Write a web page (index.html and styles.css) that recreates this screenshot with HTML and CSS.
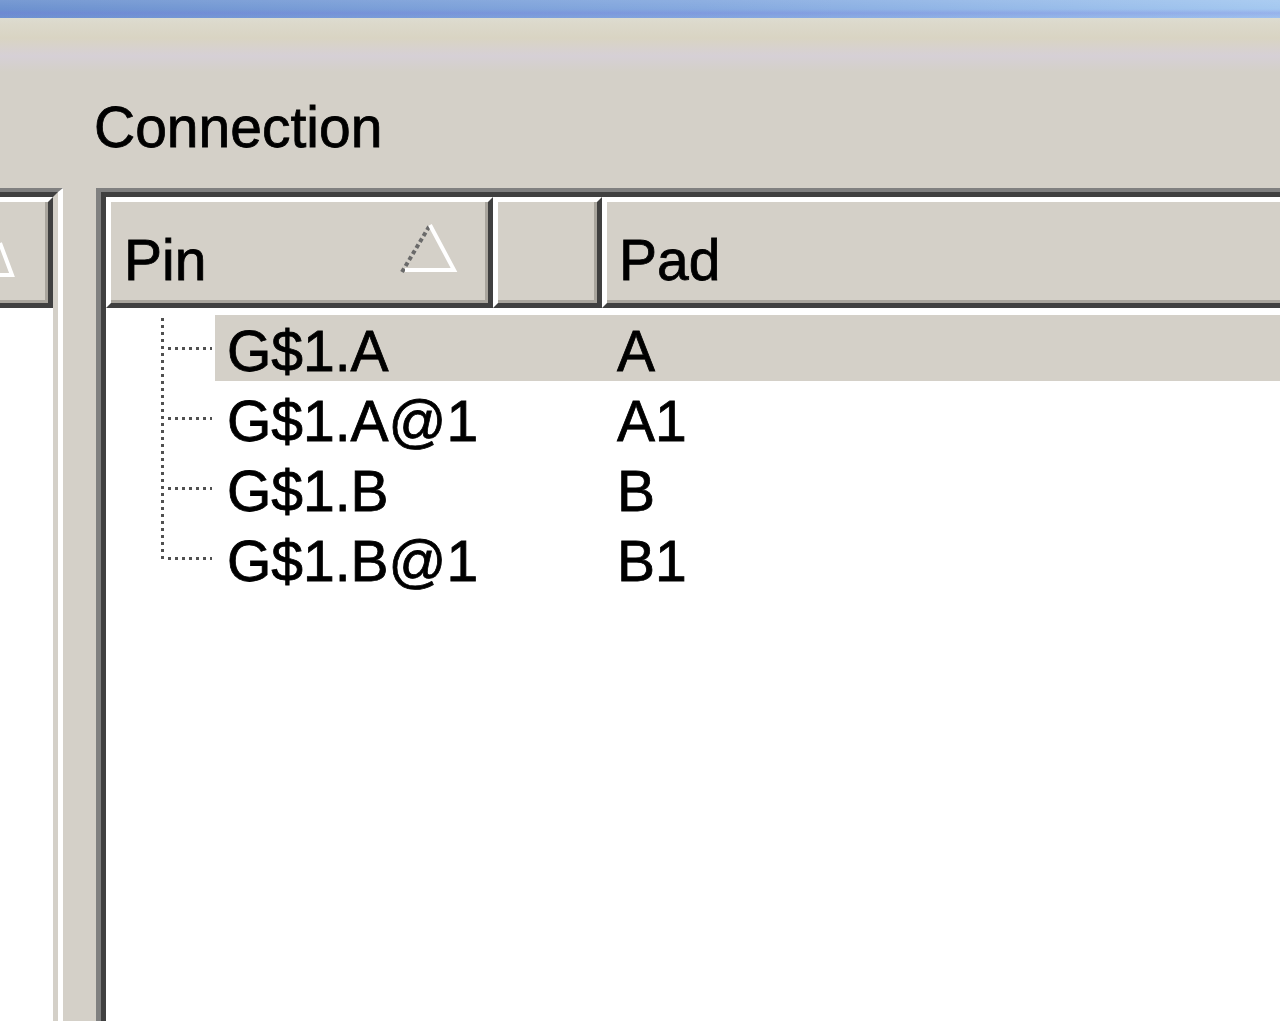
FILE: index.html
```html
<!DOCTYPE html>
<html lang="en">
<head>
  <meta charset="UTF-8" />
  <meta name="viewport" content="width=device-width, initial-scale=1.0" />
  <title>Connection</title>
  <link rel="stylesheet" href="styles.css">
</head>
<body>
  <div class="titlebar"></div>

  <div class="client">
    <div class="caption">Connection</div>

    <div class="panes">
      <!-- list on the left, only its right edge is visible -->
      <div class="listview left-list">
        <div class="lv-inner">
          <div class="header">
            <div class="col col-tail">
              <svg class="sort-tail" width="20" height="60" viewBox="0 0 20 60">
                <polyline points="0,14 12,46 0,46" fill="none" stroke="#fff" stroke-width="4" />
              </svg>
            </div>
          </div>
          <div class="lv-body"></div>
        </div>
      </div>

      <div class="listview main-list">
        <div class="lv-inner">
          <div class="header">
            <div class="col col-pin">
              <span>Pin</span>
              <svg class="sort-arrow" width="60" height="58" viewBox="0 0 60 58">
                <line x1="4" y1="52" x2="32" y2="5" stroke="#6a6a6a" stroke-width="4" stroke-dasharray="4 3" />
                <polyline points="32,5 56,50 7,50" fill="none" stroke="#fff" stroke-width="4" />
              </svg>
            </div>
            <div class="col col-blank"></div>
            <div class="col col-pad">Pad</div>
          </div>

          <div class="lv-body tree">
            <div class="row">
              <div class="branch"></div>
              <div class="sel selected"><span class="pin">G$1.A</span><span class="pad">A</span></div>
            </div>
            <div class="row">
              <div class="branch"></div>
              <div class="sel"><span class="pin">G$1.A@1</span><span class="pad">A1</span></div>
            </div>
            <div class="row">
              <div class="branch"></div>
              <div class="sel"><span class="pin">G$1.B</span><span class="pad">B</span></div>
            </div>
            <div class="row last">
              <div class="branch"></div>
              <div class="sel"><span class="pin">G$1.B@1</span><span class="pad">B1</span></div>
            </div>
          </div>
        </div>
      </div>
    </div>
  </div>
</body>
</html>
```

FILE: styles.css
```css
* {
  box-sizing: border-box;
  margin: 0;
  padding: 0;
}

body {
  width: 1280px;
  height: 1021px;
  overflow: hidden;
  font-family: 'Liberation Sans', Arial, sans-serif;
  font-size: 57px;
  color: #000;
  background: linear-gradient(#dfe6e2 0, #dcd9cb 24px, #d9d4c3 38px, #d6d0d6 56px, #d4d0c8 72px, #d4d0c8 100%);
}

/* window title bar strip */
.titlebar {
  height: 18px;
  background:
    linear-gradient(rgba(255, 255, 255, 0.08), rgba(255, 255, 255, 0) 9px, rgba(110, 110, 220, 0.25) 13px, rgba(120, 140, 220, 0.1) 18px),
    linear-gradient(to right, #6d92cf, #85a9df 55%, #a4c8f0);
}

.client {
  padding-top: 81px;
}

.caption {
  padding-left: 94px;
  line-height: 57px;
  -webkit-text-stroke: 0.8px #000;
}

.panes {
  display: flex;
  margin-top: 32px;
  height: 860px;
}

/* sunken 3D frame of a list view */
.listview {
  border-top: 4px solid #808080;
  border-left: 5px solid #808080;
  border-right: 5px solid #fff;
  background: #fff;
}

.lv-inner {
  height: 100%;
  border-top: 5px solid #404040;
  border-left: 5px solid #404040;
  border-right: 5px solid #d4d0c8;
  display: flex;
  flex-direction: column;
}

.left-list {
  width: 63px;
  border-left: 0;
}

.left-list .lv-inner {
  border-left: 0;
}

.main-list {
  margin-left: 33px;
  flex: 1;
  margin-right: -40px;
}

.header {
  display: flex;
  background: #d4d0c8;
}

.col {
  height: 111px;
  border-top: 5px solid #fff;
  border-left: 5px solid #fff;
  border-right: 5px solid #404040;
  border-bottom: 5px solid #404040;
  box-shadow: inset -3px -3px 0 #a9a59d;
  padding-top: 30px;
  line-height: 57px;
  -webkit-text-stroke: 0.8px #000;
}

.col-tail {
  width: 53px;
  border-left: 0;
}

.sort-tail {
  display: block;
  margin-top: -3px;
}

.col-pin {
  width: 387px;
  padding-left: 13px;
  display: flex;
  align-items: flex-start;
}

.sort-arrow {
  margin-left: auto;
  margin-right: 30px;
  margin-top: -12px;
}

.col-blank {
  width: 109px;
}

.col-pad {
  flex: 1;
  padding-left: 12px;
  border-right: 0;
}

.lv-body {
  flex: 1;
  background: #fff;
}

.tree {
  padding-top: 7px;
}

.row {
  display: flex;
  height: 70px;
}

/* dotted tree connectors */
.branch {
  width: 54px;
  margin-left: 55px;
  background:
    repeating-linear-gradient(to right, #505050 0 3px, transparent 3px 7px) left 7px top 32px / calc(100% - 10px) 3px no-repeat,
    repeating-linear-gradient(#505050 0 3px, transparent 3px 7px) left top 3px / 3px 100% no-repeat;
}

.row.last .branch {
  background:
    repeating-linear-gradient(to right, #505050 0 3px, transparent 3px 7px) left 7px top 32px / calc(100% - 10px) 3px no-repeat,
    repeating-linear-gradient(#505050 0 3px, transparent 3px 7px) left top 3px / 3px 33px no-repeat;
}

.sel {
  flex: 1;
  height: 66px;
  display: flex;
  padding-left: 12px;
  line-height: 72px;
  -webkit-text-stroke: 0.8px #000;
}

.sel.selected {
  background: #d4d0c8;
}

.pin {
  width: 390px;
  white-space: nowrap;
}
```
